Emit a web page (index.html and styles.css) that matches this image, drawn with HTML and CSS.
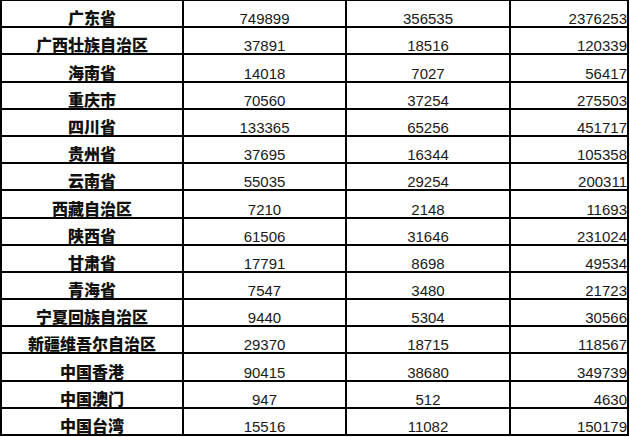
FILE: index.html
```html
<!DOCTYPE html>
<html lang="zh-CN">
<head>
<meta charset="utf-8">
<title>数据表</title>
<link rel="stylesheet" href="styles.css">
</head>
<body>
<table class="data">
<colgroup><col class="c1"><col class="c2"><col class="c3"><col class="c4"></colgroup>
<tbody>
<tr><td class="name">广东省</td><td class="num">749899</td><td class="num">356535</td><td class="tot">2376253</td></tr>
<tr><td class="name">广西壮族自治区</td><td class="num">37891</td><td class="num">18516</td><td class="tot">120339</td></tr>
<tr><td class="name">海南省</td><td class="num">14018</td><td class="num">7027</td><td class="tot">56417</td></tr>
<tr><td class="name">重庆市</td><td class="num">70560</td><td class="num">37254</td><td class="tot">275503</td></tr>
<tr><td class="name">四川省</td><td class="num">133365</td><td class="num">65256</td><td class="tot">451717</td></tr>
<tr><td class="name">贵州省</td><td class="num">37695</td><td class="num">16344</td><td class="tot">105358</td></tr>
<tr><td class="name">云南省</td><td class="num">55035</td><td class="num">29254</td><td class="tot">200311</td></tr>
<tr><td class="name">西藏自治区</td><td class="num">7210</td><td class="num">2148</td><td class="tot">11693</td></tr>
<tr><td class="name">陕西省</td><td class="num">61506</td><td class="num">31646</td><td class="tot">231024</td></tr>
<tr><td class="name">甘肃省</td><td class="num">17791</td><td class="num">8698</td><td class="tot">49534</td></tr>
<tr><td class="name">青海省</td><td class="num">7547</td><td class="num">3480</td><td class="tot">21723</td></tr>
<tr><td class="name">宁夏回族自治区</td><td class="num">9440</td><td class="num">5304</td><td class="tot">30566</td></tr>
<tr><td class="name">新疆维吾尔自治区</td><td class="num">29370</td><td class="num">18715</td><td class="tot">118567</td></tr>
<tr><td class="name">中国香港</td><td class="num">90415</td><td class="num">38680</td><td class="tot">349739</td></tr>
<tr><td class="name">中国澳门</td><td class="num">947</td><td class="num">512</td><td class="tot">4630</td></tr>
<tr><td class="name">中国台湾</td><td class="num">15516</td><td class="num">11082</td><td class="tot">150179</td></tr>
</tbody>
</table>
</body>
</html>
```
FILE: styles.css
```css
html, body {
  margin: 0;
  padding: 0;
  background: #ffffff;
}

.data {
  width: 629px;
  table-layout: fixed;
  border-collapse: separate;
  border-spacing: 0;
  border-left: 2px solid #000;
  border-top: 1px solid #000;
  color: #1a1a1a;
}

.c1 { width: 182px; }
.c2 { width: 163px; }
.c3 { width: 164px; }
.c4 { width: 118px; }

.data tr {
  height: 27.1875px;
}

.data td {
  border-right: 2px solid #000;
  border-bottom: 2px solid #000;
  padding: 0;
  vertical-align: bottom;
  white-space: nowrap;
  overflow: hidden;
}

.name {
  text-align: center;
  font-family: "Noto Sans CJK SC", "Noto Sans", sans-serif;
  font-weight: 900;
  font-size: 16px;
  line-height: 17px;
  color: #111;
}

.num, .tot {
  font-family: "Liberation Sans", Arial, sans-serif;
  font-size: 15px;
  line-height: 15px;
}

.num {
  text-align: center;
}

.tot {
  text-align: right;
  padding-right: 2px;
}
```
